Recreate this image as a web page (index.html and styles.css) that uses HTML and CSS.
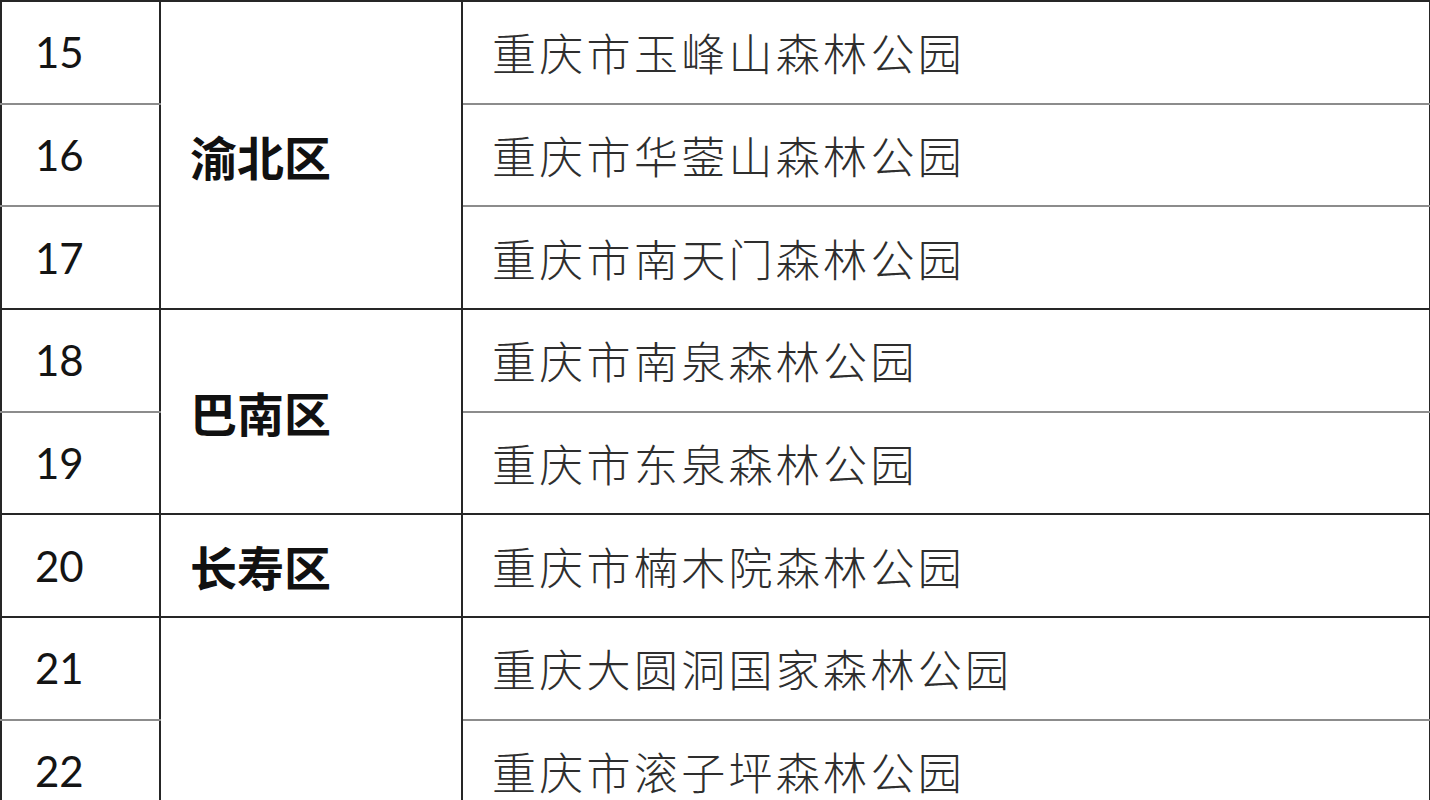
FILE: index.html
```html
<!DOCTYPE html>
<html lang="zh">
<head>
<meta charset="utf-8">
<title>森林公园名录</title>
<link rel="stylesheet" href="styles.css">
</head>
<body>
<table class="list">
  <colgroup>
    <col class="c-no">
    <col class="c-dist">
    <col class="c-name">
  </colgroup>
  <tbody>
    <tr>
      <td class="no soft">15</td>
      <td class="dist" rowspan="3">渝北区</td>
      <td class="name soft">重庆市玉峰山森林公园</td>
    </tr>
    <tr>
      <td class="no soft">16</td>
      <td class="name soft">重庆市华蓥山森林公园</td>
    </tr>
    <tr>
      <td class="no">17</td>
      <td class="name">重庆市南天门森林公园</td>
    </tr>
    <tr>
      <td class="no soft">18</td>
      <td class="dist" rowspan="2">巴南区</td>
      <td class="name soft">重庆市南泉森林公园</td>
    </tr>
    <tr>
      <td class="no">19</td>
      <td class="name">重庆市东泉森林公园</td>
    </tr>
    <tr>
      <td class="no">20</td>
      <td class="dist">长寿区</td>
      <td class="name">重庆市楠木院森林公园</td>
    </tr>
    <tr>
      <td class="no soft">21</td>
      <td class="dist" rowspan="2"></td>
      <td class="name soft">重庆大圆洞国家森林公园</td>
    </tr>
    <tr>
      <td class="no">22</td>
      <td class="name">重庆市滚子坪森林公园</td>
    </tr>
  </tbody>
</table>
</body>
</html>
```

FILE: styles.css
```css
html, body {
  margin: 0;
  padding: 0;
  background: #ffffff;
}

.list {
  border-collapse: collapse;
  table-layout: fixed;
  width: 1429px;
}

.c-no { width: 159px; }
.c-dist { width: 302px; }
.c-name { width: 968px; }

.list td {
  border: 2px solid #262626;
  height: 100.7px;
  padding: 0;
  vertical-align: middle;
  white-space: nowrap;
}

.list td.soft {
  border-bottom: 2px solid #8c8c8c;
}

.no {
  font-family: Lato, "Noto Sans", sans-serif;
  font-size: 42px;
  color: #141414;
  padding-left: 33px !important;
}

.dist {
  font-family: "Noto Sans CJK SC", sans-serif;
  font-weight: 700;
  font-size: 47px;
  color: #111111;
  padding-left: 29px !important;
}

.name {
  font-family: "Noto Sans CJK SC", sans-serif;
  font-weight: 300;
  font-size: 44px;
  letter-spacing: 3.3px;
  color: #2e2e2e;
  padding-left: 29px !important;
}
```
